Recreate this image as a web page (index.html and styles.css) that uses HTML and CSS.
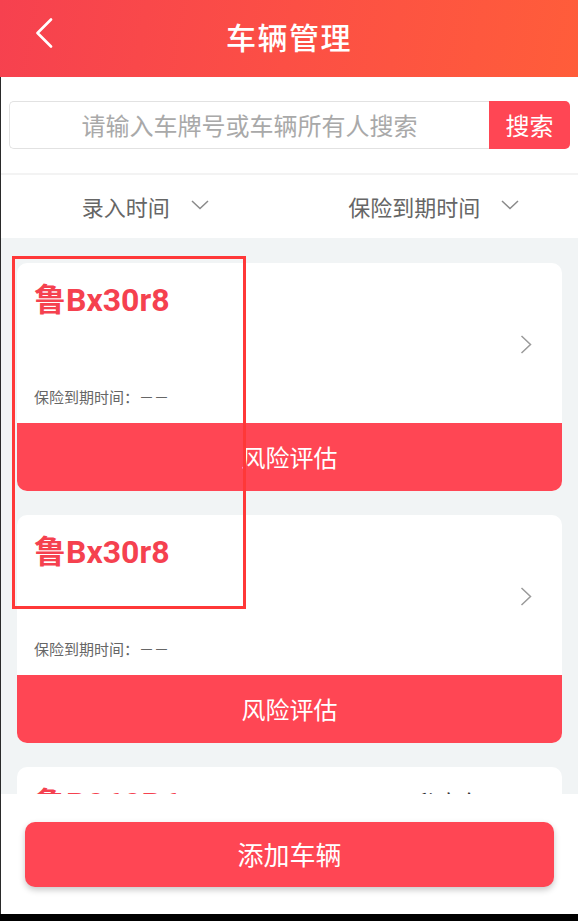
FILE: index.html
```html
<!DOCTYPE html>
<html lang="zh-CN">
<head>
<meta charset="utf-8">
<title>车辆管理</title>
<link rel="stylesheet" href="styles.css">
</head>
<body>
<div class="app">
  <header class="topbar">
    <svg class="back" width="18" height="30" viewBox="0 0 18 30"><polyline points="16,1.5 2.5,15 16,28.5" fill="none" stroke="#fff" stroke-width="2.6" stroke-linecap="round" stroke-linejoin="round"/></svg>
    <h1 class="title">车辆管理</h1>
  </header>
  <div class="body">
    <section class="search">
      <div class="search-input">请输入车牌号或车辆所有人搜索</div>
      <div class="search-btn">搜索</div>
    </section>
    <nav class="filters">
      <div class="filter"><span>录入时间</span><svg width="18" height="10" viewBox="0 0 18 10"><polyline points="1,1 9,8.5 17,1" fill="none" stroke="#8a8a8a" stroke-width="1.5"/></svg></div>
      <div class="filter"><span>保险到期时间</span><svg width="18" height="10" viewBox="0 0 18 10"><polyline points="1,1 9,8.5 17,1" fill="none" stroke="#8a8a8a" stroke-width="1.5"/></svg></div>
    </nav>
    <main class="list">
      <article class="card">
        <div class="card-top">
          <div class="card-info">
            <div class="plate">鲁Bx30r8</div>
            <div class="expire">保险到期时间：－－</div>
          </div>
          <svg class="arrow" width="12" height="19" viewBox="0 0 12 19"><polyline points="1.5,1 10.5,9.5 1.5,18" fill="none" stroke="#9a9a9a" stroke-width="1.5"/></svg>
        </div>
        <div class="card-action">风险评估</div>
      </article>
      <article class="card">
        <div class="card-top">
          <div class="card-info">
            <div class="plate">鲁Bx30r8</div>
            <div class="expire">保险到期时间：－－</div>
          </div>
          <svg class="arrow" width="12" height="19" viewBox="0 0 12 19"><polyline points="1.5,1 10.5,9.5 1.5,18" fill="none" stroke="#9a9a9a" stroke-width="1.5"/></svg>
        </div>
        <div class="card-action">风险评估</div>
      </article>
      <article class="card">
        <div class="card-top">
          <div class="card-info">
            <div class="plate">鲁B060B6</div>
            <div class="expire">保险到期时间：－－</div>
          </div>
          <div class="kind">私家车</div>
        </div>
        <div class="card-action">风险评估</div>
      </article>
    </main>
    <footer class="footer">
      <div class="add-btn">添加车辆</div>
    </footer>
  </div>
  <div class="navbar"></div>
  <div class="highlight"></div>
</div>
</body>
</html>
```

FILE: styles.css
```css
* { box-sizing: border-box; margin: 0; padding: 0; }
html, body { width: 578px; height: 921px; overflow: hidden; }
body {
  font-family: "Noto Sans CJK SC", "Noto Sans", Roboto, sans-serif;
  background: #fff;
}
.app {
  position: relative;
  width: 578px;
  height: 921px;
  display: flex;
  flex-direction: column;
}
.topbar {
  height: 77px;
  flex: none;
  background: linear-gradient(100deg, #f6414f 0%, #fc4f45 50%, #ff5d3a 100%);
  display: flex;
  align-items: center;
  justify-content: center;
  position: relative;
}
.back {
  position: absolute;
  left: 35px;
  top: 18px;
}
.title {
  color: #fff;
  font-size: 30px;
  font-weight: 500;
  letter-spacing: 1.5px;
  line-height: 40px;
  margin-top: -6px;
}
.body {
  flex: 1;
  display: flex;
  flex-direction: column;
  border-left: 1px solid #2a2a2a;
  min-height: 0;
}
.search {
  height: 98px;
  flex: none;
  display: flex;
  padding: 24px 8px 24px 8px;
  background: #fff;
  border-bottom: 2px solid #f3f3f3;
}
.search-input {
  flex: 1;
  border: 1px solid #e2e2e2;
  border-right: none;
  border-radius: 5px 0 0 5px;
  color: #a9a9a9;
  font-size: 24px;
  display: flex;
  align-items: center;
  justify-content: center;
  padding-bottom: 2px;
}
.search-btn {
  width: 81px;
  background: #ff4654;
  color: #fff;
  font-size: 24px;
  border-radius: 0 5px 5px 0;
  display: flex;
  align-items: center;
  justify-content: center;
  padding-bottom: 2px;
}
.filters {
  height: 63px;
  flex: none;
  display: flex;
  background: #fff;
}
.filter {
  flex: 1;
  display: flex;
  align-items: center;
  justify-content: center;
  gap: 21px;
  color: #666;
  font-size: 22px;
}
.filter span { line-height: 30px; margin-bottom: 2px; }
.filter svg { margin-top: -3px; }
.list {
  flex: 1;
  min-height: 0;
  overflow: hidden;
  background: #f1f4f5;
  padding: 25px 16px 0 16px;
  display: flex;
  flex-direction: column;
  gap: 24px;
}
.card {
  flex: none;
  background: #fff;
  border-radius: 10px;
  overflow: hidden;
  height: 228px;
  display: flex;
  flex-direction: column;
}
.card-top {
  height: 160px;
  display: flex;
  align-items: center;
  justify-content: space-between;
  padding: 0 30px 0 17px;
}
.card-info {
  height: 160px;
  display: flex;
  flex-direction: column;
  justify-content: space-between;
  padding: 17px 0 16px 0;
}
.plate {
  font-family: Roboto, "Noto Sans CJK SC", sans-serif;
  font-weight: 700;
  font-size: 32px;
  line-height: 40px;
  color: #f5414f;
}
.expire {
  font-size: 15px;
  line-height: 20px;
  color: #666;
}
.arrow { margin-top: 2px; }
.kind {
  font-size: 22px;
  color: #333;
  align-self: flex-start;
  margin-top: 18px;
  margin-right: 50px;
}
.card-action {
  flex: 1;
  background: #ff4654;
  color: #fff;
  font-size: 24px;
  display: flex;
  align-items: center;
  justify-content: center;
  padding-bottom: 1px;
}
.footer {
  height: 120px;
  flex: none;
  background: #fff;
  padding: 28px 24px 0 24px;
}
.add-btn {
  height: 65px;
  border-radius: 10px;
  background: #ff4654;
  box-shadow: 0 3px 6px rgba(0, 0, 0, 0.22);
  color: #fff;
  font-size: 26px;
  display: flex;
  align-items: center;
  justify-content: center;
  padding-bottom: 3px;
}
.navbar {
  height: 7px;
  flex: none;
  background: #000;
}
.highlight {
  position: absolute;
  left: 12px;
  top: 256px;
  width: 234px;
  height: 353px;
  border: 3px solid #ff3838;
  pointer-events: none;
}
```
